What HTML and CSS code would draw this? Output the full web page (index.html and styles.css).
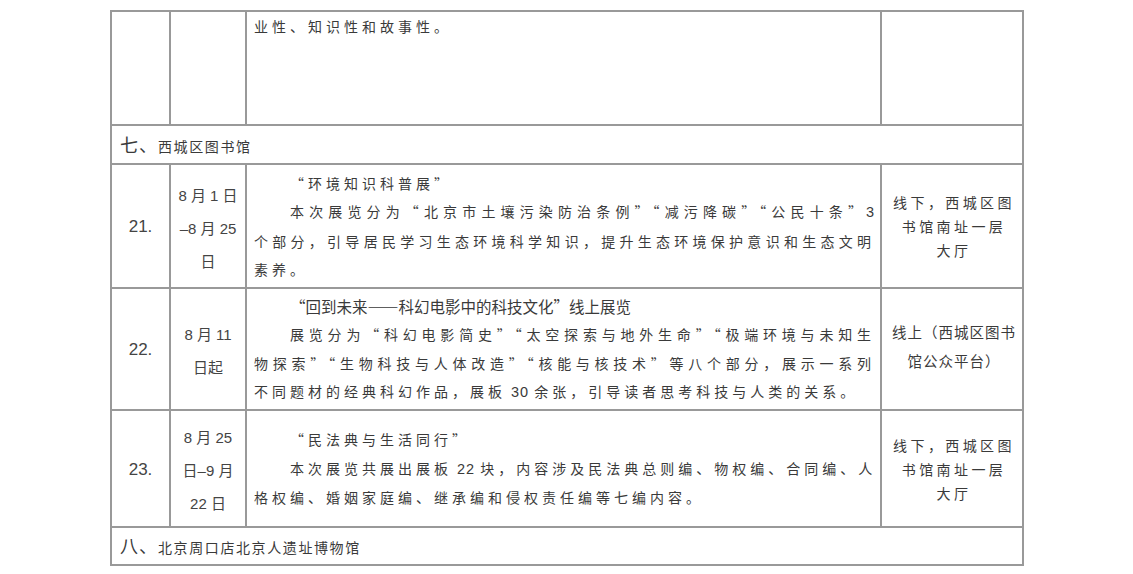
FILE: index.html
```html
<!DOCTYPE html>
<html lang="zh-CN">
<head>
<meta charset="utf-8">
<title>展览</title>
<link rel="stylesheet" href="styles.css">
</head>
<body>
<table class="sheet">
  <colgroup>
    <col class="c-no"><col class="c-date"><col class="c-body"><col class="c-place">
  </colgroup>
  <tr class="r-cont">
    <td></td>
    <td></td>
    <td class="body top"><div class="ln end">业性、知识性和故事性。</div></td>
    <td></td>
  </tr>
  <tr class="r-sec">
    <td colspan="4" class="sec"><span class="sec-no">七、</span>西城区图书馆</td>
  </tr>
  <tr class="r-21">
    <td class="no">21.</td>
    <td class="date"><div>8 月 1 日</div><div>–8 月 25</div><div>日</div></td>
    <td class="body">
      <div class="ln end ind">“环境知识科普展”</div>
      <div class="ln ind">本次展览分为“北京市土壤污染防治条例”“减污降碳”“公民十条”<span class="num">3</span></div>
      <div class="ln">个部分，引导居民学习生态环境科学知识，提升生态环境保护意识和生态文明</div>
      <div class="ln end">素养。</div>
    </td>
    <td class="place"><div>线下，西城区图</div><div>书馆南址一层</div><div>大厅</div></td>
  </tr>
  <tr class="r-22">
    <td class="no">22.</td>
    <td class="date"><div>8 月 11</div><div>日起</div></td>
    <td class="body">
      <div class="ln end ind tight">“回到未来——科幻电影中的科技文化”线上展览</div>
      <div class="ln ind">展览分为“科幻电影简史”“太空探索与地外生命”“极端环境与未知生</div>
      <div class="ln">物探索”“生物科技与人体改造”“核能与核技术”等八个部分，展示一系列</div>
      <div class="ln end">不同题材的经典科幻作品，展板<span class="num"> 30 </span>余张，引导读者思考科技与人类的关系。</div>
    </td>
    <td class="place narrow"><div>线上（西城区图书</div><div>馆公众平台）</div></td>
  </tr>
  <tr class="r-23">
    <td class="no">23.</td>
    <td class="date"><div>8 月 25</div><div>日–9 月</div><div>22 日</div></td>
    <td class="body">
      <div class="ln end ind">“民法典与生活同行”</div>
      <div class="ln ind">本次展览共展出展板<span class="num"> 22 </span>块，内容涉及民法典总则编、物权编、合同编、人</div>
      <div class="ln end">格权编、婚姻家庭编、继承编和侵权责任编等七编内容。</div>
    </td>
    <td class="place"><div>线下，西城区图</div><div>书馆南址一层</div><div>大厅</div></td>
  </tr>
  <tr class="r-sec2">
    <td colspan="4" class="sec"><span class="sec-no">八、</span>北京周口店北京人遗址博物馆</td>
  </tr>
</table>
</body>
</html>
```

FILE: styles.css
```css
html, body {
  margin: 0;
  padding: 0;
  background: #ffffff;
}

body {
  padding: 10px 0 0 110px;
  font-family: "Noto Sans CJK SC", sans-serif;
  color: #3a3a3a;
}

.sheet {
  border-collapse: collapse;
  table-layout: fixed;
  width: 912px;
}

.c-no { width: 59px; }
.c-date { width: 76px; }
.c-body { width: 635px; }
.c-place { width: 142px; }

.sheet td {
  border: 2px solid #999999;
  padding: 0;
  vertical-align: middle;
}

.r-cont { height: 114px; }
.r-sec { height: 39px; }
.r-21 { height: 124px; }
.r-22 { height: 122px; }
.r-23 { height: 117px; }
.r-sec2 { height: 38px; }

.sec {
  padding-left: 8px !important;
  font-size: 14px;
  letter-spacing: 1.6px;
  line-height: 20px;
}

.sec-no {
  font-size: 18px;
  letter-spacing: 1px;
}

.no {
  text-align: center;
  font-family: "Liberation Sans", "Noto Sans CJK SC", sans-serif;
  font-size: 17px;
  color: #444444;
  padding-top: 2px !important;
}

.date {
  text-align: center;
  font-family: "Liberation Sans", "Noto Sans CJK SC", sans-serif;
  font-size: 15px;
  line-height: 33px;
  padding-top: 4px !important;
  color: #444444;
}

.body {
  padding: 0 5px 0 7px !important;
  font-size: 14px;
  letter-spacing: 4px;
  line-height: 28.4px;
}

.body.top {
  vertical-align: top;
  padding-top: 0 !important;
}

.ln {
  text-align: justify;
  text-align-last: justify;
  white-space: nowrap;
  font-variant-east-asian: full-width;
}

.num {
  font-variant-east-asian: normal;
  letter-spacing: 1px;
  font-family: "Liberation Sans", sans-serif;
  font-size: 14.5px;
}

.ln.end {
  text-align-last: left;
}

.ln.ind {
  text-indent: 36px;
}

.ln.tight {
  font-size: 15.5px;
  letter-spacing: 0;
  font-variant-east-asian: normal;
}

.place {
  text-align: center;
  font-size: 14px;
  letter-spacing: 3.4px;
  line-height: 24px;
  padding-left: 4px !important;
}

.place.narrow {
  letter-spacing: 1px;
  line-height: 29px;
  font-size: 14.5px;
  padding-bottom: 6px !important;
}
```
